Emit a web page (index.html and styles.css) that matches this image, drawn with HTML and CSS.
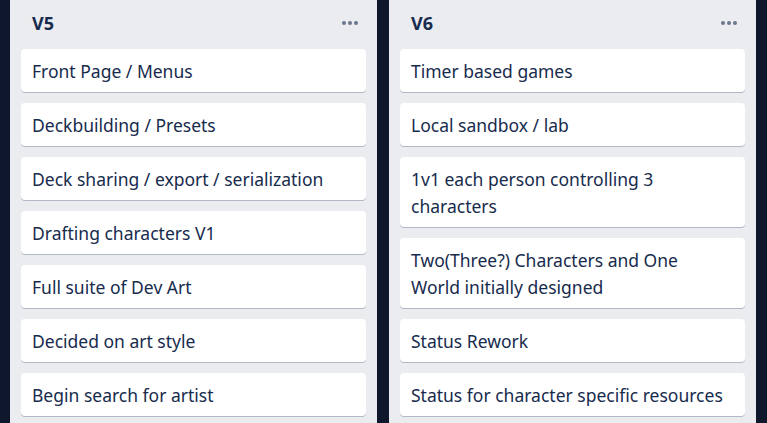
FILE: index.html
```html
<!DOCTYPE html>
<html>
<head>
<meta charset="utf-8">
<link rel="stylesheet" href="styles.css">
</head>
<body>
<div class="board">
  <section class="list">
    <header class="list-header">
      <h2 class="list-title">V5</h2>
      <span class="more"><i></i><i></i><i></i></span>
    </header>
    <div class="card">Front Page / Menus</div>
    <div class="card">Deckbuilding / Presets</div>
    <div class="card">Deck sharing / export / serialization</div>
    <div class="card">Drafting characters V1</div>
    <div class="card">Full suite of Dev Art</div>
    <div class="card">Decided on art style</div>
    <div class="card">Begin search for artist</div>
  </section>
  <section class="list">
    <header class="list-header">
      <h2 class="list-title">V6</h2>
      <span class="more"><i></i><i></i><i></i></span>
    </header>
    <div class="card">Timer based games</div>
    <div class="card">Local sandbox / lab</div>
    <div class="card">1v1 each person controlling 3 characters</div>
    <div class="card">Two(Three?) Characters and One World initially designed</div>
    <div class="card">Status Rework</div>
    <div class="card">Status for character specific resources</div>
  </section>
</div>
</body>
</html>
```
FILE: styles.css
```css
html, body {
  margin: 0;
  padding: 0;
  height: 100%;
  overflow: hidden;
}
body {
  background: #0f172d;
  font-family: "Noto Sans", "Open Sans", sans-serif;
  color: #172b4d;
}
.board {
  display: flex;
  gap: 12px;
  padding-left: 10px;
  height: 100%;
  align-items: stretch;
}
.list {
  width: 367px;
  box-sizing: border-box;
  background: #ebecf0;
  padding: 0 11px;
  overflow: hidden;
}
.list-header {
  height: 49px;
  display: flex;
  align-items: center;
  justify-content: space-between;
  padding: 0 8px 4px 11px;
  box-sizing: border-box;
}
.list-title {
  margin: 0;
  font-size: 18px;
  font-weight: 700;
  line-height: 24px;
  color: #172b4d;
}
.more {
  display: flex;
  gap: 2px;
}
.more i {
  width: 4px;
  height: 4px;
  border-radius: 50%;
  background: #6b778c;
}
.card {
  background: #fff;
  border-radius: 4px;
  box-shadow: 0 1px 0 rgba(9, 30, 66, 0.25);
  padding: 9px 17px 7px 11px;
  margin-bottom: 11px;
  font-size: 17.5px;
  line-height: 27px;
}
```
